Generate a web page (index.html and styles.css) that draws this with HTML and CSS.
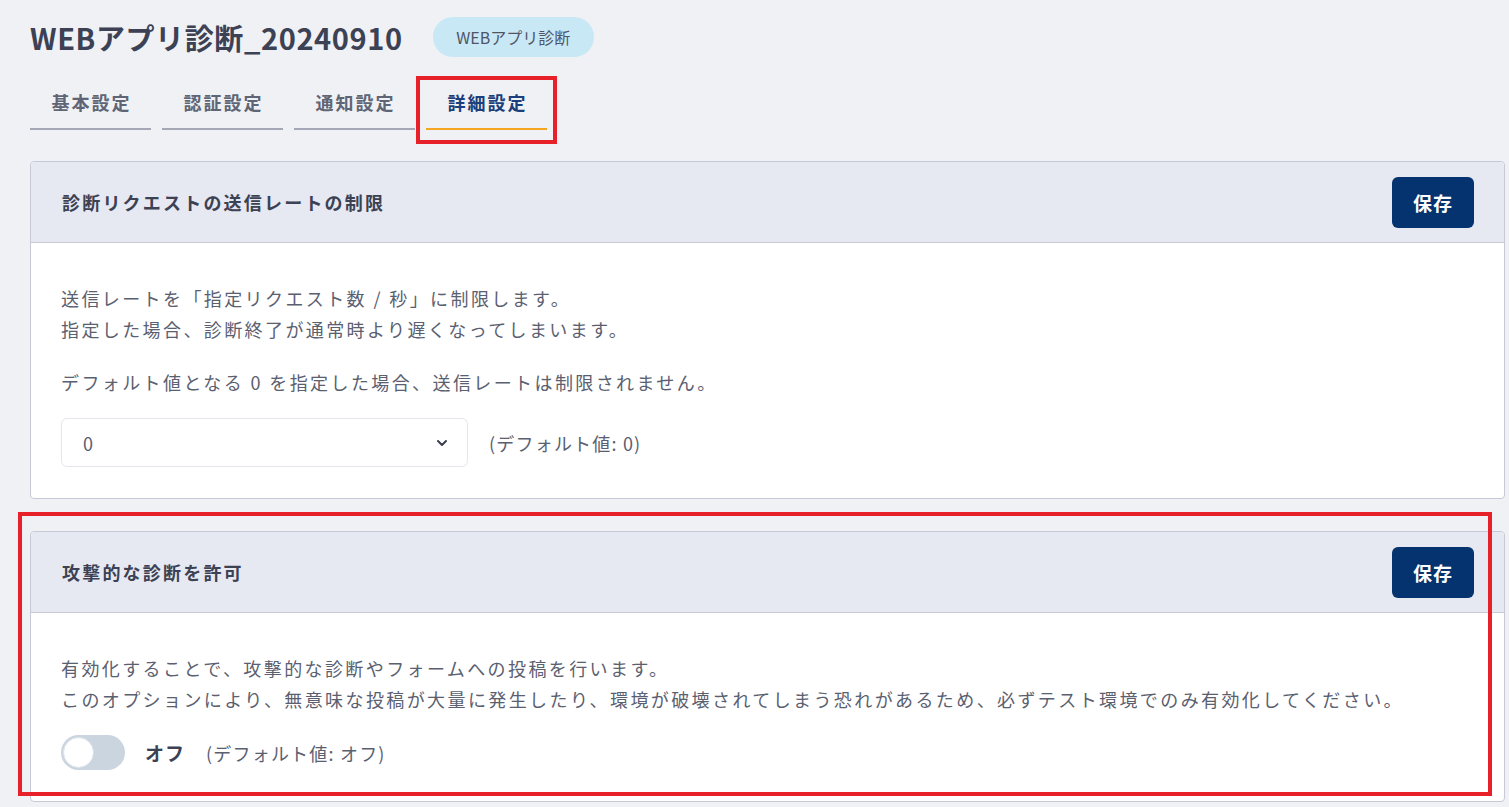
FILE: index.html
```html
<!DOCTYPE html>
<html lang="ja">
<head>
<meta charset="utf-8">
<title>WEBアプリ診断_20240910</title>
<link rel="stylesheet" href="styles.css">
</head>
<body>
<div class="page">
  <div class="title-row">
    <h1 class="title">WEBアプリ診断_20240910</h1>
    <span class="badge">WEBアプリ診断</span>
  </div>
  <nav class="tabs">
    <div class="tab">基本設定</div>
    <div class="tab">認証設定</div>
    <div class="tab">通知設定</div>
    <div class="tab active annotated-tab">詳細設定</div>
  </nav>

  <section class="card">
    <div class="card-header">
      <h2 class="card-title">診断リクエストの送信レートの制限</h2>
      <button class="btn-save">保存</button>
    </div>
    <div class="card-body">
      <p class="text">送信レートを「指定リクエスト数 / 秒」に制限します。<br>指定した場合、診断終了が通常時より遅くなってしまいます。</p>
      <p class="text">デフォルト値となる 0 を指定した場合、送信レートは制限されません。</p>
      <div class="control-row">
        <div class="select">
          <span class="select-value">0</span>
          <svg class="chevron" width="12" height="8" viewBox="0 0 12 8"><path d="M2 2 L6 6 L10 2" fill="none" stroke="#3a3f4d" stroke-width="2" stroke-linecap="round" stroke-linejoin="round"/></svg>
        </div>
        <span class="hint">(デフォルト値: 0)</span>
      </div>
    </div>
  </section>

  <section class="card annotated-card">
    <div class="card-header">
      <h2 class="card-title">攻撃的な診断を許可</h2>
      <button class="btn-save">保存</button>
    </div>
    <div class="card-body">
      <p class="text">有効化することで、攻撃的な診断やフォームへの投稿を行います。<br>このオプションにより、無意味な投稿が大量に発生したり、環境が破壊されてしまう恐れがあるため、必ずテスト環境でのみ有効化してください。</p>
      <div class="control-row toggle-row">
        <span class="toggle"><span class="knob"></span></span>
        <span class="toggle-label">オフ</span>
        <span class="hint">(デフォルト値: オフ)</span>
      </div>
    </div>
  </section>
</div>
</body>
</html>
```

FILE: styles.css
```css
* { box-sizing: border-box; }
html, body { margin: 0; padding: 0; }
body {
  background: #f0f1f4;
  font-family: "Noto Sans CJK JP", "Noto Sans", sans-serif;
  color: #5a6070;
  width: 1509px;
  height: 807px;
  overflow: hidden;
}
.page {
  padding: 17px 4px 0 30px;
}
.title-row {
  display: flex;
  align-items: center;
  height: 40px;
  gap: 30px;
}
.title {
  margin: 0;
  font-size: 29px;
  font-weight: 700;
  color: #3c4154;
  letter-spacing: 0.6px;
  line-height: 40px;
}
.badge {
  display: inline-flex;
  align-items: center;
  justify-content: center;
  height: 40px;
  width: 161px;
  border-radius: 20px;
  background: #c9e8f6;
  color: #4f5565;
  font-size: 16px;
}
.tabs {
  display: flex;
  gap: 11px;
  margin-top: 23px;
}
.tab {
  width: 121px;
  padding: 10px 0 14px;
  text-align: center;
  font-size: 18px;
  line-height: 24px;
  font-weight: 700;
  letter-spacing: 2px;
  text-indent: 2px;
  color: #5f6575;
  border-bottom: 2px solid #a4a8b6;
}
.tab.active {
  color: #1c3e7a;
  border-bottom-color: #f4a521;
}
.annotated-tab { position: relative; }
.annotated-tab::after {
  content: "";
  position: absolute;
  left: -10px;
  right: -10px;
  top: -4px;
  bottom: -16px;
  border: 4px solid #e8202a;
  pointer-events: none;
}
.card {
  margin-top: 31px;
  background: #fff;
  border: 1px solid #c5cad6;
  border-radius: 4px;
}
.card + .card { margin-top: 32px; }
.card-header {
  display: flex;
  align-items: center;
  justify-content: space-between;
  height: 81px;
  padding: 0 30px 0 31px;
  background: #e6e9f1;
  border-bottom: 1px solid #c5cad6;
  border-radius: 4px 4px 0 0;
}
.card-title {
  margin: 0;
  font-size: 18px;
  font-weight: 700;
  letter-spacing: 2.2px;
  color: #3c4154;
}
.btn-save {
  width: 82px;
  height: 51px;
  border: none;
  border-radius: 6px;
  background: #04336f;
  color: #fff;
  font-family: inherit;
  font-size: 19px;
  font-weight: 700;
  letter-spacing: 1px;
}
.card-body {
  padding: 40px 30px 31px 30px;
}
.text {
  margin: 0 0 22px;
  font-size: 18px;
  line-height: 31px;
  letter-spacing: 2.4px;
  color: #5a6070;
}
.text:last-of-type { margin-bottom: 20px; }
.control-row {
  display: flex;
  align-items: center;
}
.select {
  width: 407px;
  height: 49px;
  border: 1px solid #e3e6ed;
  border-radius: 6px;
  display: flex;
  align-items: center;
  justify-content: space-between;
  padding: 0 19px 0 21px;
  background: #fff;
}
.select-value {
  font-size: 18px;
  color: #5a6070;
}
.hint {
  margin-left: 21px;
  font-size: 18px;
  letter-spacing: 1.2px;
  color: #5a6070;
}
.toggle {
  width: 64px;
  height: 35px;
  border-radius: 18px;
  background: #cbd5e0;
  position: relative;
  display: inline-block;
}
.knob {
  position: absolute;
  left: 2px;
  top: 2px;
  width: 31px;
  height: 31px;
  border-radius: 50%;
  background: #fff;
  border: 1px solid #dde3ea;
}
.toggle-label {
  margin-left: 20px;
  font-size: 19px;
  font-weight: 700;
  color: #3c4154;
  letter-spacing: 1px;
}
.toggle-row .hint { margin-left: 21px; }
.annotated-card { position: relative; }
.annotated-card::after {
  content: "";
  position: absolute;
  left: -13px;
  right: 12px;
  top: -20px;
  bottom: 5px;
  border: 4px solid #e8202a;
  pointer-events: none;
}
```
